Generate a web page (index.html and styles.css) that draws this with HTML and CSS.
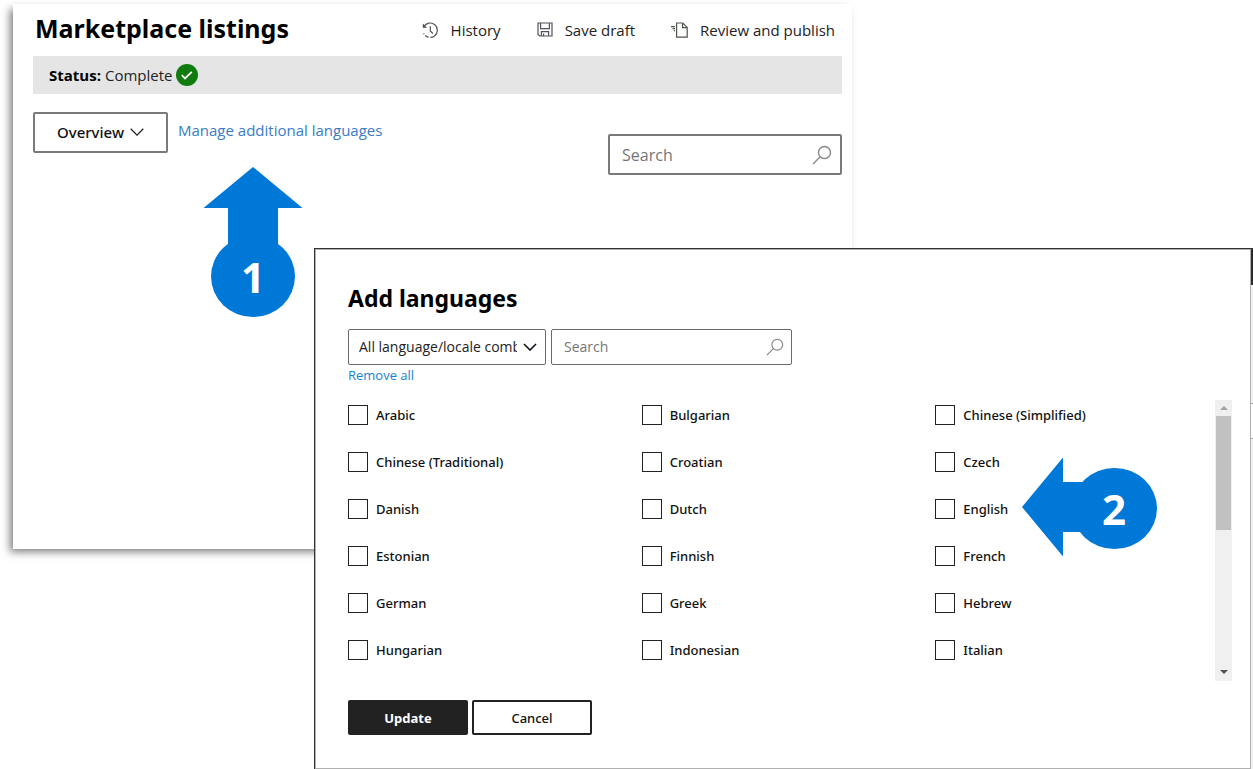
FILE: index.html
```html
<!DOCTYPE html>
<html lang="en">
<head>
<meta charset="utf-8">
<title>Marketplace listings</title>
<meta name="viewport" content="width=device-width, initial-scale=1">
<link rel="stylesheet" href="styles.css">
</head>
<body>
<div class="stage">
  <main class="listings">
    <header class="listings-header">
      <h1>Marketplace listings</h1>
      <div class="commands">
        <button class="command" type="button">
          <svg width="17" height="17" viewBox="0 0 17 17" fill="none" stroke="#555" stroke-width="1.2"><path d="M.8 1.500v4.300h4.200z" fill="#444" stroke="none"/><path d="M1.800 4.800A7.200 7.200 0 1 1 1.600 11.200" stroke-dasharray="30 1.500 4 1.500"/><path d="M8.300 4.300v4.600l2.600 2.600"/></svg>
          History
        </button>
        <button class="command" type="button">
          <svg width="16" height="16" viewBox="0 0 16 16" fill="none" stroke="#50505e" stroke-width="1.200"><path d="M1 1h14v13H2.600L1 12.400zM3.600 1v5.600h8.800V1M4.400 14V9.600h7.200V14M6.600 11.400V14"/></svg>
          Save draft
        </button>
        <button class="command" type="button">
          <svg width="17" height="17" viewBox="0 0 17 17" fill="none" stroke="#4c564c" stroke-width="1.200"><path d="M5.600 1h6.200l4.400 4.400v9.800H5.600z"/><path d="M11.600 1.200v4.400H16M0 4.600h4M1.500 6.600H4M2.700 8.600H4"/></svg>
          Review and publish
        </button>
      </div>
    </header>
    <div class="status">
      <strong>Status:</strong> Complete
      <svg width="22" height="22" viewBox="0 0 22 22"><circle cx="11" cy="11" r="11" fill="#107c10"/><path d="M5.800 11.200l3.200 3.200 6.800-6.600" fill="none" stroke="#fff" stroke-width="1.800"/></svg>
    </div>
    <div class="toolbar">
      <button class="overview" type="button">Overview
        <svg width="14" height="8" viewBox="0 0 14 8" fill="none" stroke="#222" stroke-width="1.300"><path d="M.7.8L7 7.100 13.300.8"/></svg>
      </button>
      <a class="manage" href="#languages">Manage additional languages</a>
      <div class="search search-main">
        <input type="search" placeholder="Search" aria-label="Search listings">
        <svg width="20" height="20" viewBox="0 0 20 20" fill="none" stroke="#888" stroke-width="1.400"><circle cx="12.500" cy="7.500" r="6"/><path d="M8.200 11.800L1 19"/></svg>
      </div>
    </div>
  </main>

  <div class="backdrop">
    <section class="dialog" id="languages" role="dialog" aria-labelledby="dialog-title">
      <h2 id="dialog-title">Add languages</h2>
      <div class="filters">
        <div class="picker">
          <select aria-label="Language filter"><option>All language/locale combinations</option></select>
          <svg width="14" height="8" viewBox="0 0 14 8" fill="none" stroke="#111" stroke-width="1.600"><path d="M1 1l6 6 6-6"/></svg>
        </div>
        <div class="search search-dialog">
          <input type="search" placeholder="Search" aria-label="Search languages">
          <svg width="18" height="18" viewBox="0 0 20 20" fill="none" stroke="#888" stroke-width="1.300"><circle cx="12.500" cy="7.500" r="6"/><path d="M8.200 11.800L1 19"/></svg>
        </div>
      </div>
      <a class="remove" href="#languages">Remove all</a>
      <div class="list">
        <div class="languages">
          <label><input type="checkbox">Arabic</label>
          <label><input type="checkbox">Bulgarian</label>
          <label><input type="checkbox">Chinese (Simplified)</label>
          <label><input type="checkbox">Chinese (Traditional)</label>
          <label><input type="checkbox">Croatian</label>
          <label><input type="checkbox">Czech</label>
          <label><input type="checkbox">Danish</label>
          <label><input type="checkbox">Dutch</label>
          <label><input type="checkbox">English</label>
          <label><input type="checkbox">Estonian</label>
          <label><input type="checkbox">Finnish</label>
          <label><input type="checkbox">French</label>
          <label><input type="checkbox">German</label>
          <label><input type="checkbox">Greek</label>
          <label><input type="checkbox">Hebrew</label>
          <label><input type="checkbox">Hungarian</label>
          <label><input type="checkbox">Indonesian</label>
          <label><input type="checkbox">Italian</label>
        </div>
        <div class="scrollbar" aria-hidden="true">
          <svg width="8" height="4" viewBox="0 0 8 4"><path d="M4 0l4 4H0z" fill="#a3a3a3"/></svg>
          <div class="thumb"></div>
          <svg width="8" height="4" viewBox="0 0 8 4"><path d="M4 4l4-4H0z" fill="#505050"/></svg>
        </div>
      </div>
      <div class="actions">
        <button class="update" type="button">Update</button>
        <button class="cancel" type="button">Cancel</button>
      </div>
    </section>
  </div>

  <div class="callout callout-one">
    <svg width="100" height="150" viewBox="0 0 100 150" fill="#0078d7"><path d="M50 0l49.500 41H75v50H25V41H.5z"/><ellipse cx="50" cy="109.500" rx="42" ry="40.500"/></svg>
    <span>1</span>
  </div>
  <div class="callout callout-two">
    <svg width="136" height="100" viewBox="0 0 136 100" fill="#0078d7"><path d="M0 50L41 .5V25h45v50H41v24.500z"/><ellipse cx="92.500" cy="51.500" rx="42.500" ry="40.500"/></svg>
    <span>2</span>
  </div>
</div>
</body>
</html>
```
FILE: styles.css
```css
* {
  box-sizing: border-box;
}

body {
  margin: 0;
  background: #fff;
  color: #222;
  font-family: "Open Sans", "Noto Sans", sans-serif;
  font-size: 14px;
  line-height: 20px;
}

button,
input,
select {
  margin: 0;
  font: inherit;
  color: inherit;
}

a {
  text-decoration: none;
}

svg {
  flex: none;
  display: block;
}

.stage {
  position: relative;
  min-height: 100vh;
  padding-top: 4px;
  overflow: hidden;
}

.listings {
  margin: 0 32% 0 13px;
  min-height: 545px;
  padding: 4px 10px 0 20px;
  background: #fff;
  box-shadow: -4px 4px 8px -1px rgba(0, 0, 0, 0.5);
}

.listings-header {
  display: flex;
  justify-content: space-between;
  align-items: center;
  height: 48px;
  padding: 0 7px 8px 2px;
}

h1,
h2 {
  margin: 0;
  color: #000;
  font-family: "Noto Sans", "Open Sans", sans-serif;
  font-weight: 700;
}

h1 {
  font-size: 25px;
  line-height: 36px;
}

.commands {
  display: flex;
  gap: 36px;
  padding-top: 4px;
}

.command {
  display: flex;
  align-items: center;
  gap: 12px;
  padding: 0;
  border: 0;
  background: none;
  font-size: 15px;
}

.status {
  display: flex;
  align-items: center;
  gap: 4px;
  height: 38px;
  padding: 0 16px;
  background: #e5e5e5;
  font-size: 15px;
}

.status strong {
  color: #000;
}

.toolbar {
  display: flex;
  align-items: flex-start;
  gap: 10px;
  padding-top: 18px;
}

.overview {
  display: flex;
  align-items: center;
  justify-content: center;
  gap: 6px;
  width: 135px;
  height: 41px;
  padding: 0 0 2px;
  border: 2px solid #7a7a7a;
  border-radius: 2px;
  background: #fff;
  color: #111;
  font-family: "Noto Sans", "Open Sans", sans-serif;
  font-size: 15px;
  font-weight: 500;
}

.manage {
  padding-top: 8px;
  color: #3a7bc8;
  font-size: 15px;
}

.search {
  display: flex;
  align-items: center;
  background: #fff;
  border: 1px solid #6a6a6a;
  border-radius: 2px;
}

.search input {
  flex: 1;
  min-width: 0;
  padding: 0;
  border: 0;
  outline: 0;
  background: none;
  appearance: none;
}

.search input::placeholder {
  color: #767676;
  opacity: 1;
}

.search-main {
  width: 234px;
  height: 41px;
  margin: 22px 0 0 auto;
  padding: 0 8px 0 12px;
  border: 2px solid #7a7a7a;
  font-size: 16px;
}

.backdrop {
  position: absolute;
  top: 248px;
  left: 314px;
  right: 0;
  bottom: 0;
  display: flex;
  padding-right: 2px;
  border-left: 1px solid #333;
  border-top: 1px solid #333;
  background: linear-gradient(#2b2b2b 36px, #f3f3f3 36px 154px, #aaa 154px 155px, #fff 155px 189px, #aaa 189px 190px, #f3f3f3 190px);
}

.dialog {
  flex: 1;
  min-width: 0;
  padding: 32px 18px 32px 32px;
  border: 1px solid #b0b0b0;
  background: #fff;
}

h2 {
  font-size: 23px;
  line-height: 32px;
}

.filters {
  display: flex;
  gap: 5px;
  margin-top: 15px;
}

.picker {
  display: grid;
  align-items: center;
  width: 198px;
  height: 36px;
}

.picker select,
.picker svg {
  grid-area: 1 / 1;
}

.picker select {
  width: 100%;
  height: 100%;
  padding: 0 28px 0 10px;
  border: 1px solid #6a6a6a;
  border-radius: 2px;
  background: #fff;
  appearance: none;
}

.picker svg {
  justify-self: end;
  margin-right: 9px;
  pointer-events: none;
}

.search-dialog {
  width: 241px;
  height: 36px;
  padding: 0 7px 0 12px;
}

.remove {
  display: block;
  width: fit-content;
  color: #1a7fd0;
  font-size: 13px;
}

.list {
  display: flex;
  margin-top: 15px;
}

.languages {
  flex: 1;
  display: grid;
  grid-template-columns: repeat(3, 1fr);
  grid-auto-rows: 20px;
  gap: 27px 14px;
  padding-top: 5px;
}

.languages label {
  display: flex;
  align-items: center;
  gap: 8px;
  color: #111;
  font-family: "Noto Sans", "Open Sans", sans-serif;
  font-size: 13px;
  font-weight: 500;
}

.languages input {
  width: 20px;
  height: 20px;
  border: 1px solid #222;
  background: #fff;
  appearance: none;
}

.languages input:checked {
  background: #222;
}

.scrollbar {
  display: flex;
  flex-direction: column;
  align-items: center;
  width: 17px;
  height: 281px;
  padding: 6px 1px 7px;
  background: #f0f0f0;
}

.thumb {
  width: 100%;
  height: 114px;
  margin: 6px 0 auto;
  background: #c1c1c1;
}

.actions {
  display: flex;
  gap: 4px;
  margin-top: 19px;
}

.actions button {
  width: 120px;
  height: 35px;
  padding: 0;
  border: 2px solid #222;
  border-radius: 2px;
  font-family: "Noto Sans", "Open Sans", sans-serif;
  font-size: 13px;
}

.actions .update {
  background: #222;
  color: #fff;
  font-weight: 700;
}

.actions .cancel {
  background: #fff;
  color: #111;
  font-weight: 500;
}

.callout {
  position: absolute;
  display: grid;
  color: #fff;
  font-size: 42px;
  font-weight: 700;
  line-height: 80px;
  text-align: center;
}

.callout svg,
.callout span {
  grid-area: 1 / 1;
}

.callout-one {
  top: 167px;
  left: 203px;
}

.callout-one span {
  align-self: end;
}

.callout-two {
  top: 457px;
  left: 1022px;
}

.callout-two span {
  padding: 12px 0 0 48px;
}
```
